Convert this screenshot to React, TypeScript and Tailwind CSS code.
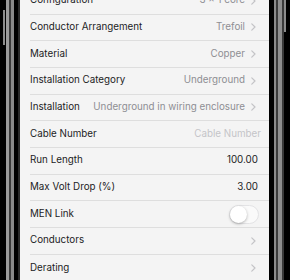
// Ligne de réglage
interface Row {
  label: string;
  value?: string;
  kind: "link" | "number" | "placeholder" | "toggle";
}

const rows: Row[] = [
  { label: "Configuration", value: "3 x 1 core", kind: "link" },
  { label: "Conductor Arrangement", value: "Trefoil", kind: "link" },
  { label: "Material", value: "Copper", kind: "link" },
  { label: "Installation Category", value: "Underground", kind: "link" },
  { label: "Installation", value: "Underground in wiring enclosure", kind: "link" },
  { label: "Cable Number", value: "Cable Number", kind: "placeholder" },
  { label: "Run Length", value: "100.00", kind: "number" },
  { label: "Max Volt Drop (%)", value: "3.00", kind: "number" },
  { label: "MEN Link", kind: "toggle" },
  { label: "Conductors", kind: "link" },
  { label: "Derating", kind: "link" },
];

function Chevron() {
  return (
    <svg width="5" height="8" viewBox="0 0 5 8" className="shrink-0">
      <polyline
        points="0.8,0.8 4,4 0.8,7.2"
        fill="none"
        stroke="#c4c4c7"
        strokeWidth="1.2"
        strokeLinecap="round"
        strokeLinejoin="round"
      />
    </svg>
  );
}

function Toggle() {
  return (
    <div className="w-[30px] h-[19px] rounded-full bg-[#fafafa] border border-[#e3e3e5] flex items-center">
      <div className="w-[17px] h-[17px] rounded-full bg-white shadow-[0_1px_3px_rgba(0,0,0,0.3)]" />
    </div>
  );
}

function RowEnd({ row }: { row: Row }) {
  if (row.kind === "link") {
    return (
      <div className="flex items-center gap-[6px] pr-[13px] min-w-0">
        {row.value && (
          <span className="text-[#8e8e93] whitespace-nowrap">{row.value}</span>
        )}
        <Chevron />
      </div>
    );
  }
  if (row.kind === "number") {
    return <span className="text-[#1c1c1e] pr-[11px]">{row.value}</span>;
  }
  if (row.kind === "placeholder") {
    return <span className="text-[#c4c4c8] pr-[8px]">{row.value}</span>;
  }
  return (
    <div className="pr-[10px]">
      <Toggle />
    </div>
  );
}

export default function App() {
  return (
    <div
      className="w-[290px] h-[280px] bg-black flex overflow-hidden"
      style={{ fontFamily: "Inter, 'Liberation Sans', sans-serif" }}
    >
      {/* Bord gauche du téléphone */}
      <div className="w-[20px] h-full flex shrink-0">
        <div className="w-[3px] bg-black" />
        <div className="w-[2px] flex flex-col">
          <div className="mt-[10px] h-[35px] bg-[#8c8c8c]" />
        </div>
        <div className="w-[1px] bg-black" />
        <div className="w-[3px] bg-[#9a9a9a]" />
        <div className="w-[2px] bg-[#3a3a3a]" />
        <div className="w-[3px] bg-[#8a8a8a]" />
        <div className="w-[4px] bg-black" />
        <div className="w-[2px] bg-[#2a2a2a]" />
      </div>

      {/* Écran */}
      <div className="w-[249px] h-full bg-[#f4f4f4] overflow-hidden text-[9.8px]">
        <div className="-mt-[12px] pl-[10px]">
          {rows.map((row, i) => (
            <div
              key={row.label}
              className={
                "h-[26.67px] flex items-center justify-between gap-[8px] " +
                (i < rows.length - 1 ? "border-b border-[#dedede]" : "")
              }
            >
              <span className="text-[#1c1c1e] whitespace-nowrap">{row.label}</span>
              <RowEnd row={row} />
            </div>
          ))}
        </div>
      </div>

      {/* Bord droit du téléphone */}
      <div className="w-[21px] h-full flex shrink-0">
        <div className="w-[5px] bg-black" />
        <div className="w-[2px] bg-[#8a8a8a]" />
        <div className="w-[2px] bg-[#3a3a3a]" />
        <div className="w-[4px] bg-[#8e8e8e]" />
        <div className="w-[2px] bg-[#3a3a3a]" />
        <div className="w-[6px] flex flex-col">
          <div className="w-[2px] h-[32px] bg-[#8c8c8c]" />
        </div>
      </div>
    </div>
  );
}
